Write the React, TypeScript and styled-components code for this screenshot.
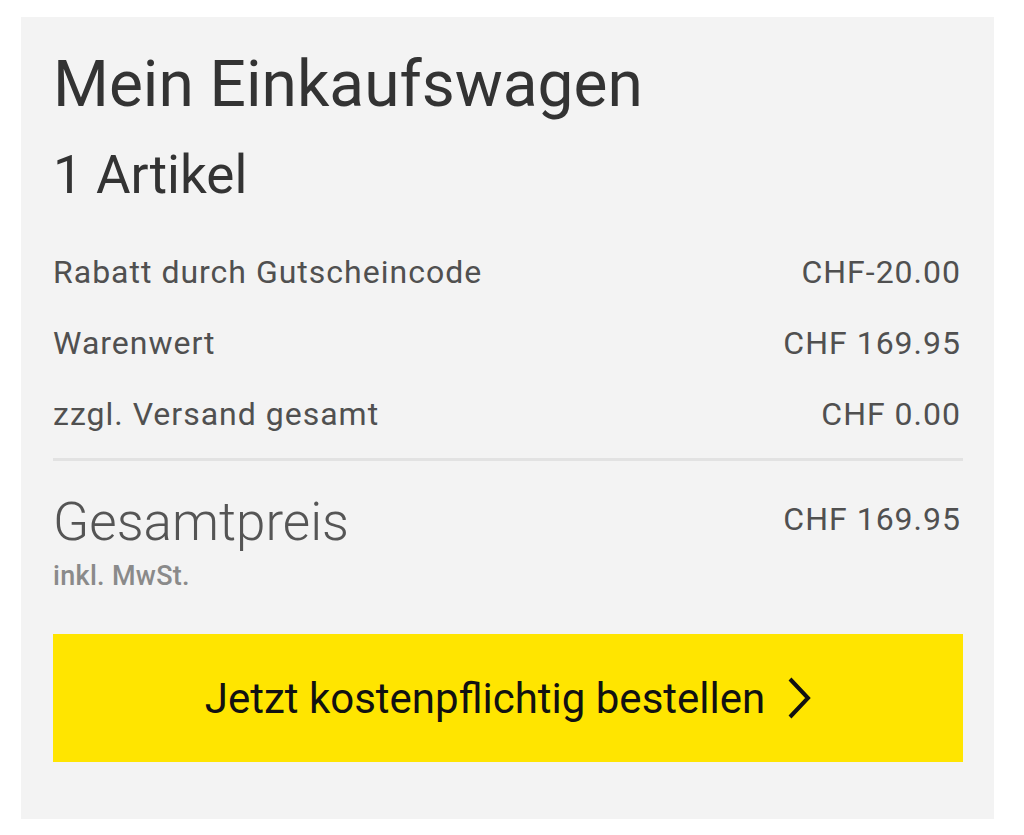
import React from "react";
import styled, { createGlobalStyle } from "styled-components";

const Global = createGlobalStyle`
  html, body { margin: 0; padding: 0; background: #ffffff; }
  body { font-family: Roboto, "Noto Sans", "Liberation Sans", sans-serif; }
  * { box-sizing: border-box; }
`;

const Card = styled.section`
  width: 973px;
  margin: 17px 0 15px 21px;
  padding: 36px 31px 57px 32px;
  background: #f3f3f3;
  display: flex;
  flex-direction: column;
`;

const Title = styled.h1`
  margin: 0;
  font-size: 64px;
  line-height: 64px;
  font-weight: 400;
  color: #333333;
`;

const Count = styled.h2`
  margin: 32px 0 0;
  font-size: 53px;
  line-height: 53px;
  font-weight: 400;
  color: #333333;
`;

const Lines = styled.div`
  margin-top: 35px;
  display: flex;
  flex-direction: column;
`;

const Row = styled.div`
  display: flex;
  justify-content: space-between;
  align-items: center;
  height: 71px;
  padding-right: 2px;
  font-size: 32px;
  line-height: 71px;
  letter-spacing: 1px;
  color: #505050;
`;

const Divider = styled.hr`
  margin: 8px 0 0;
  border: 0;
  height: 3px;
  background: #e2e2e2;
`;

const TotalRow = styled.div`
  margin-top: 35px;
  padding-right: 2px;
  display: flex;
  justify-content: space-between;
  align-items: flex-start;
`;

const TotalLabel = styled.div`
  display: flex;
  flex-direction: column;
`;

const TotalTitle = styled.span`
  font-size: 53px;
  line-height: 52px;
  font-weight: 300;
  color: #555555;
`;

const Vat = styled.span`
  margin-top: 16px;
  font-size: 27px;
  line-height: 24px;
  letter-spacing: 0.3px;
  font-weight: 500;
  color: #8a8a8a;
`;

const TotalValue = styled.span`
  padding-top: 7px;
  font-size: 32px;
  line-height: 32px;
  letter-spacing: 1px;
  color: #505050;
`;

const OrderButton = styled.button`
  margin-top: 46px;
  height: 128px;
  width: 100%;
  border: 0;
  background: #ffe500;
  color: #111111;
  font-family: Roboto, "Noto Sans", "Liberation Sans", sans-serif;
  font-size: 42px;
  font-weight: 400;
  display: flex;
  align-items: center;
  justify-content: center;
  gap: 22px;
  cursor: pointer;
`;

const Chevron = () => (
  <svg width="24" height="42" viewBox="0 0 24 42" fill="none" aria-hidden="true">
    <path d="M3 2 L21 21 L3 40" stroke="#111" strokeWidth="4" strokeLinecap="butt" strokeLinejoin="miter" />
  </svg>
);

const lines = [
  ["Rabatt durch Gutscheincode", "CHF-20.00"],
  ["Warenwert", "CHF 169.95"],
  ["zzgl. Versand gesamt", "CHF 0.00"],
];

export default function App() {
  return (
    <>
      <Global />
      <Card>
        <Title>Mein Einkaufswagen</Title>
        <Count>1 Artikel</Count>
        <Lines>
          {lines.map(([label, value]) => (
            <Row key={label}>
              <span>{label}</span>
              <span>{value}</span>
            </Row>
          ))}
        </Lines>
        <Divider />
        <TotalRow>
          <TotalLabel>
            <TotalTitle>Gesamtpreis</TotalTitle>
            <Vat>inkl. MwSt.</Vat>
          </TotalLabel>
          <TotalValue>CHF 169.95</TotalValue>
        </TotalRow>
        <OrderButton>
          <span>Jetzt kostenpflichtig bestellen</span>
          <Chevron />
        </OrderButton>
      </Card>
    </>
  );
}
